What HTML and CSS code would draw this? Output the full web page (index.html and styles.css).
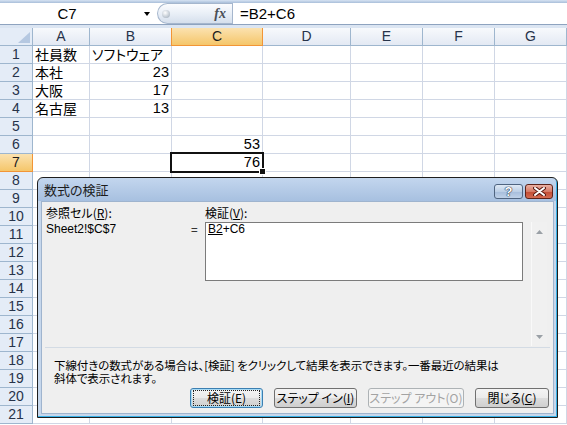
FILE: index.html
```html
<!DOCTYPE html>
<html lang="ja">
<head>
  <meta charset="UTF-8">
  <title>数式の検証</title>
  <link rel="stylesheet" href="styles.css">
</head>
<body>
<div class="app">

  <div class="ribbon-edge"></div>
  <div class="formula-bar">
    <div class="name-box">C7</div>
    <div class="name-drop"><span class="tri"></span></div>
    <div class="fx-pill"><span class="ball"></span><span class="fx">fx</span></div>
    <div class="formula">=B2+C6</div>
  </div>
  <div class="bar-gap"></div>

  <!-- feuille -->
  <div class="sheet">
    <div class="row head">
      <div class="corner"><svg width="12" height="11" viewBox="0 0 12 11"><polygon points="12,0 12,11 0,11" fill="#b5c8e1"/></svg></div>
      <div class="ch">A</div><div class="ch">B</div><div class="ch on">C</div><div class="ch">D</div><div class="ch">E</div><div class="ch">F</div><div class="ch">G</div>
    </div>
    <div class="row"><div class="rh">1</div><div class="c">社員数</div><div class="c">ソフトウェア</div><div class="c"></div><div class="c"></div><div class="c"></div><div class="c"></div><div class="c"></div></div>
    <div class="row"><div class="rh">2</div><div class="c">本社</div><div class="c num">23</div><div class="c"></div><div class="c"></div><div class="c"></div><div class="c"></div><div class="c"></div></div>
    <div class="row"><div class="rh">3</div><div class="c">大阪</div><div class="c num">17</div><div class="c"></div><div class="c"></div><div class="c"></div><div class="c"></div><div class="c"></div></div>
    <div class="row"><div class="rh">4</div><div class="c">名古屋</div><div class="c num">13</div><div class="c"></div><div class="c"></div><div class="c"></div><div class="c"></div><div class="c"></div></div>
    <div class="row"><div class="rh">5</div><div class="c"></div><div class="c"></div><div class="c"></div><div class="c"></div><div class="c"></div><div class="c"></div><div class="c"></div></div>
    <div class="row"><div class="rh">6</div><div class="c"></div><div class="c"></div><div class="c num">53</div><div class="c"></div><div class="c"></div><div class="c"></div><div class="c"></div></div>
    <div class="row"><div class="rh on">7</div><div class="c"></div><div class="c"></div><div class="c num sel">76</div><div class="c"></div><div class="c"></div><div class="c"></div><div class="c"></div></div>
    <div class="row"><div class="rh">8</div><div class="c"></div><div class="c"></div><div class="c"></div><div class="c"></div><div class="c"></div><div class="c"></div><div class="c"></div></div>
    <div class="row"><div class="rh">9</div><div class="c"></div><div class="c"></div><div class="c"></div><div class="c"></div><div class="c"></div><div class="c"></div><div class="c"></div></div>
    <div class="row"><div class="rh">10</div><div class="c"></div><div class="c"></div><div class="c"></div><div class="c"></div><div class="c"></div><div class="c"></div><div class="c"></div></div>
    <div class="row"><div class="rh">11</div><div class="c"></div><div class="c"></div><div class="c"></div><div class="c"></div><div class="c"></div><div class="c"></div><div class="c"></div></div>
    <div class="row"><div class="rh">12</div><div class="c"></div><div class="c"></div><div class="c"></div><div class="c"></div><div class="c"></div><div class="c"></div><div class="c"></div></div>
    <div class="row"><div class="rh">13</div><div class="c"></div><div class="c"></div><div class="c"></div><div class="c"></div><div class="c"></div><div class="c"></div><div class="c"></div></div>
    <div class="row"><div class="rh">14</div><div class="c"></div><div class="c"></div><div class="c"></div><div class="c"></div><div class="c"></div><div class="c"></div><div class="c"></div></div>
    <div class="row"><div class="rh">15</div><div class="c"></div><div class="c"></div><div class="c"></div><div class="c"></div><div class="c"></div><div class="c"></div><div class="c"></div></div>
    <div class="row"><div class="rh">16</div><div class="c"></div><div class="c"></div><div class="c"></div><div class="c"></div><div class="c"></div><div class="c"></div><div class="c"></div></div>
    <div class="row"><div class="rh">17</div><div class="c"></div><div class="c"></div><div class="c"></div><div class="c"></div><div class="c"></div><div class="c"></div><div class="c"></div></div>
    <div class="row"><div class="rh">18</div><div class="c"></div><div class="c"></div><div class="c"></div><div class="c"></div><div class="c"></div><div class="c"></div><div class="c"></div></div>
    <div class="row"><div class="rh">19</div><div class="c"></div><div class="c"></div><div class="c"></div><div class="c"></div><div class="c"></div><div class="c"></div><div class="c"></div></div>
    <div class="row"><div class="rh">20</div><div class="c"></div><div class="c"></div><div class="c"></div><div class="c"></div><div class="c"></div><div class="c"></div><div class="c"></div></div>
    <div class="row"><div class="rh">21</div><div class="c"></div><div class="c"></div><div class="c"></div><div class="c"></div><div class="c"></div><div class="c"></div><div class="c"></div></div>
  </div>

  <!-- boite de dialogue -->
  <div class="dialog">
    <div class="dlg-title">
      <span class="dlg-caption">数式の検証</span>
      <span class="dlg-btn help">?</span>
      <span class="dlg-btn close">
        <svg width="13" height="9" viewBox="0 0 13 9">
          <path d="M2 1 L11 8 M11 1 L2 8" stroke="#5a1a12" stroke-width="4" stroke-linecap="round"/>
          <path d="M2 1 L11 8 M11 1 L2 8" stroke="#fff" stroke-width="2" stroke-linecap="round"/>
        </svg>
      </span>
    </div>
    <div class="dlg-body">
      <div class="dlg-top">
        <div class="lbl">参照セル(<u>R</u>):</div>
        <div></div>
        <div class="lbl">検証(<u>V</u>):</div>
        <div></div>
        <div></div>
        <div class="ref">Sheet2!$C$7</div>
        <div class="eq">=</div>
        <div class="eval"><u>B2</u>+C6</div>
        <div></div>
        <div class="scroll">
          <svg width="7" height="4" viewBox="0 0 7 4"><polygon points="3.5,0 7,4 0,4" fill="#9aa0a6"/></svg>
          <svg width="7" height="4" viewBox="0 0 7 4"><polygon points="0,0 7,0 3.5,4" fill="#9aa0a6"/></svg>
        </div>
      </div>
      <div class="sep"></div>
      <p class="note">下線付きの数式がある場合は、[検証] をクリックして結果を表示できます。一番最近の結果は<br>斜体で表示されます。</p>
      <div class="buttons">
        <button class="btn w1 focus"><span class="focus-rect">検証(E)</span></button>
        <button class="btn w2">ステップ イン(<u>I</u>)</button>
        <button class="btn w3" disabled>ステップ アウト(O)</button>
        <button class="btn w4">閉じる(<u>C</u>)</button>
      </div>
    </div>
  </div>

</div>
</body>
</html>
```

FILE: styles.css
```css
body {
  margin: 0;
  font-family: "Noto Sans CJK JP", "Liberation Sans", sans-serif;
  background: #fff;
}

.app {
  position: relative;
  width: 567px;
  height: 425px;
  overflow: hidden;
}

/* barre de formule */
.ribbon-edge {
  height: 3px;
  background: linear-gradient(#d6e3f3, #a9bed9);
}

.formula-bar {
  display: flex;
  height: 21px;
  border-bottom: 1px solid #8ea3bf;
  background: #fff;
}

.name-box {
  width: 134px;
  text-align: center;
  font: 15px/21px "Liberation Sans", sans-serif;
  color: #000;
}

.name-drop {
  width: 23px;
  display: flex;
  align-items: center;
  padding-left: 10px;
  box-sizing: border-box;
}

.name-drop .tri {
  width: 0;
  height: 0;
  border-left: 3px solid transparent;
  border-right: 3px solid transparent;
  border-top: 4px solid #000;
  margin-top: 1px;
}

.fx-pill {
  width: 75px;
  box-sizing: border-box;
  border: 1px solid #a5b6cd;
  border-right: none;
  border-radius: 11px 0 0 11px;
  background: linear-gradient(#fbfcfe, #e9eff7 50%, #d5dfec);
  display: flex;
  align-items: center;
  justify-content: space-between;
  padding: 0 6px 0 4px;
}

.fx-pill .ball {
  width: 8px;
  height: 8px;
  border-radius: 50%;
  background: radial-gradient(circle at 40% 35%, #ffffff, #b7c1cc 70%, #8d98a6);
}

.fx-pill .fx {
  font: italic bold 14px/1 "Liberation Serif", serif;
  color: #4a4f57;
}

.formula {
  flex: 1;
  border-left: 1px solid #a5b6cd;
  padding-left: 7px;
  font: 15px/21px "Liberation Sans", sans-serif;
  color: #000;
}

.bar-gap {
  height: 3px;
  background: #dbe5f2;
}

/* grille */
.row {
  display: grid;
  grid-template-columns: 33px 57px 82px 91px 88px 72px 72px 72px;
  height: 18px;
}

.row > div {
  box-sizing: border-box;
  border-right: 1px solid #d0d7e5;
  border-bottom: 1px solid #d0d7e5;
  white-space: nowrap;
}

.c {
  font-size: 14px;
  line-height: 17px;
  padding: 0 2px;
  color: #000;
  font-feature-settings: "palt";
}

.c.num {
  text-align: right;
  font-family: "Liberation Sans", sans-serif;
  font-size: 14.5px;
}

.head > div {
  border-right: 1px solid #9eb6ce;
  border-bottom: 1px solid #9eb6ce;
}

.corner {
  background: #e4ecf7;
  display: flex;
  align-items: flex-end;
  justify-content: flex-end;
  padding: 0 2px 2px 0;
}

.ch {
  background: linear-gradient(#f7f9fc, #e3e9f3);
  text-align: center;
  font: 14px/17px "Liberation Sans", sans-serif;
  color: #27334a;
}

.row .rh {
  background: #e4ecf7;
  border-right: 1px solid #9eb6ce;
  border-bottom: 1px solid #9eb6ce;
  text-align: center;
  font: 14px/17px "Liberation Sans", sans-serif;
  color: #27334a;
}

.row .ch.on,
.row .rh.on {
  background: linear-gradient(#fbe2b0, #f5c66a);
  border-color: #f29536;
  color: #1c1c1c;
}

.row .ch.on {
  border-left: 1px solid #f29536;
  margin-left: -1px;
}

.sel {
  position: relative;
}

.sel::before {
  content: "";
  position: absolute;
  left: -2px;
  top: -2px;
  right: -2px;
  bottom: -2px;
  border: 2px solid #111;
}

.sel::after {
  content: "";
  position: absolute;
  right: -4px;
  bottom: -4px;
  width: 5px;
  height: 5px;
  background: #111;
  border: 1px solid #fff;
}

/* dialogue */
.dialog {
  position: absolute;
  left: 37px;
  top: 177px;
  width: 521px;
  height: 241px;
  box-sizing: border-box;
  border: 1px solid #1e1e1e;
  border-radius: 6px 6px 0 0;
  background: linear-gradient(#c3d6ee, #a7c0e0 23px, #c6d7ec 23px);
  padding: 0 3px 3px;
  display: flex;
  flex-direction: column;
  box-shadow: inset -1px -1px 0 #37b2e8;
  font-size: 12px;
  color: #000;
  font-feature-settings: "palt";
}

.dlg-title {
  height: 23px;
  display: flex;
  align-items: center;
  padding-left: 3px;
}

.dlg-caption {
  font-size: 13px;
  color: #1b1b1b;
  flex: 1;
}

.dlg-btn {
  height: 15px;
  box-sizing: border-box;
  border: 1px solid #4f6480;
  border-radius: 3px;
  display: flex;
  align-items: center;
  justify-content: center;
  margin-top: 3px;
}

.dlg-btn.help {
  width: 29px;
  margin-right: 2px;
  background: linear-gradient(#dfe9f5, #bccfe6 50%, #a5bcdb 50%, #bfd1e8);
  font: bold 13px/1 "Liberation Sans", sans-serif;
  color: #fff;
  text-shadow: 0 0 1px #1e2d44, 0 0 1px #1e2d44, 0 0 1px #1e2d44;
}

.dlg-btn.close {
  width: 28px;
  margin-right: 1px;
  border-color: #5c2219;
  background: linear-gradient(#eab0a3, #d67a66 50%, #c24a32 50%, #d36b52);
}

.dlg-body {
  flex: 1;
  background: #efefef;
  border: 1px solid #9fb4ce;
}

.dlg-top {
  display: grid;
  grid-template-columns: 143px 16px 318px 8px 16px;
  grid-template-rows: 16px 124px;
  margin: 4px 0 0 4px;
}

.lbl {
  line-height: 14px;
}

.ref {
  font-family: "Liberation Sans", sans-serif;
  line-height: 14px;
}

.eq {
  line-height: 14px;
  padding-left: 2px;
}

.eval {
  height: 59px;
  box-sizing: border-box;
  border: 1px solid #7b7b7b;
  background: #fff;
  padding: 0 2px;
  font-family: "Liberation Sans", sans-serif;
  line-height: 13px;
}

.scroll {
  background: linear-gradient(90deg, #f9f9f9 0, #f9f9f9 1px, #f0f0f0 1px);
  display: flex;
  flex-direction: column;
  justify-content: space-between;
  align-items: center;
  padding: 8px 0 7px;
  box-sizing: border-box;
}

.sep {
  height: 1px;
  margin: 1px 3px 0;
  background: #d3dbe4;
}

.note {
  margin: 11px 0 0 12px;
  line-height: 13px;
  font-size: 11.5px;
  letter-spacing: -0.1px;
  white-space: nowrap;
}

.buttons {
  display: flex;
  justify-content: flex-end;
  gap: 11px;
  margin-top: 3px;
  padding-right: 4px;
}

.btn {
  height: 20px;
  box-sizing: border-box;
  border: 1px solid #707070;
  border-radius: 3px;
  background: linear-gradient(#f4f4f4, #ebebeb 50%, #dddddd 50%, #cfcfcf);
  font: 12px/1 "Noto Sans CJK JP", sans-serif;
  font-feature-settings: "palt";
  color: #000;
  padding: 0;
  display: flex;
  align-items: center;
  justify-content: center;
}

.w1 { width: 73px; }
.w2 { width: 83px; }
.w3 { width: 96px; }
.w4 { width: 74px; }

.btn.focus {
  border-color: #3c7fb1;
  box-shadow: inset 0 0 0 1px #a6dbf7;
  align-items: stretch;
}

.focus-rect {
  flex: 1;
  margin: 1px 2px 1px 2px;
  border: 1px dotted #222;
  display: flex;
  align-items: center;
  justify-content: center;
}

.btn:disabled {
  border-color: #adb2b5;
  background: #f4f4f4;
  color: #a3a3a3;
}
```
